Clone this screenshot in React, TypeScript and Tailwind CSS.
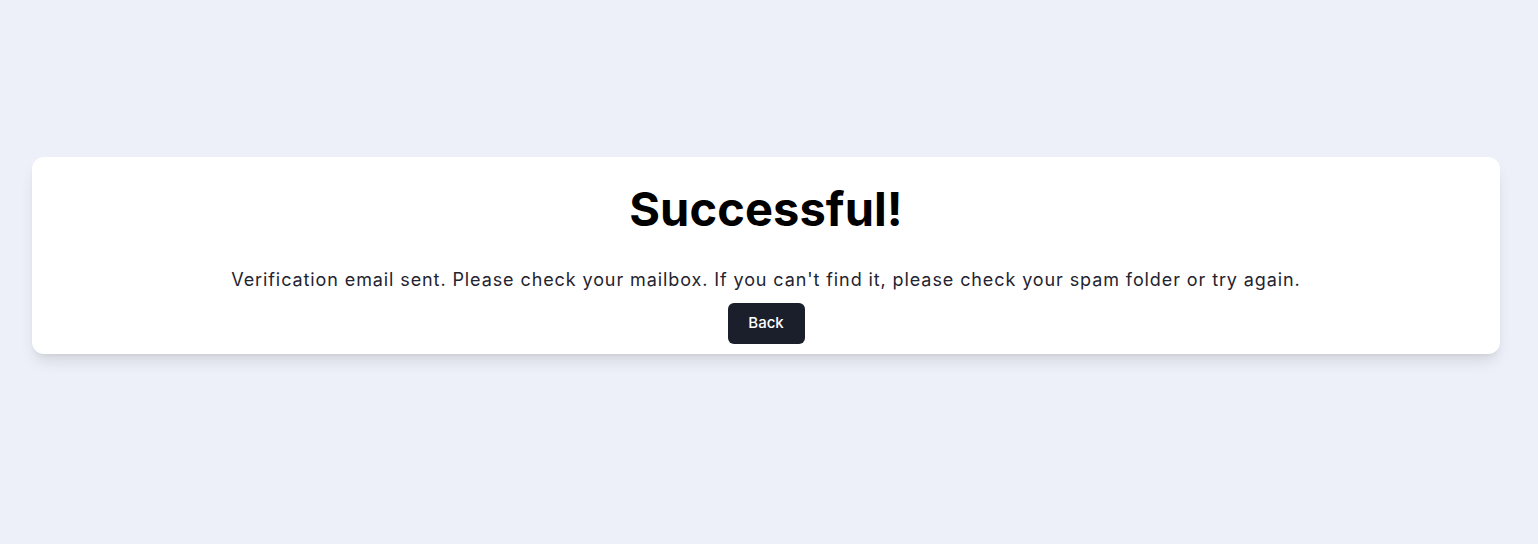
export default function App() {
  return (
    <div
      className="min-h-screen bg-[#edf0f8] flex flex-col justify-center pl-8 pr-[38px] pb-[34px]"
      style={{ fontFamily: '"Inter", "Noto Sans", sans-serif' }}
    >
      <div className="bg-white rounded-xl shadow-lg flex flex-col items-center pt-[22px] pb-[10px]">
        <h1 className="text-[47px] leading-[60px] font-bold text-black tracking-[0.1px]">
          Successful!
        </h1>
        <p className="mt-[27px] text-[18px] leading-[28px] text-[#1f2430] tracking-[0.9px]">
          Verification email sent. Please check your mailbox. If you can't find it, please check your spam folder or try again.
        </p>
        <button className="mt-[9px] w-[77px] h-[41px] bg-[#1b1f2b] text-white text-[15px] font-medium rounded-md">
          Back
        </button>
      </div>
    </div>
  );
}
